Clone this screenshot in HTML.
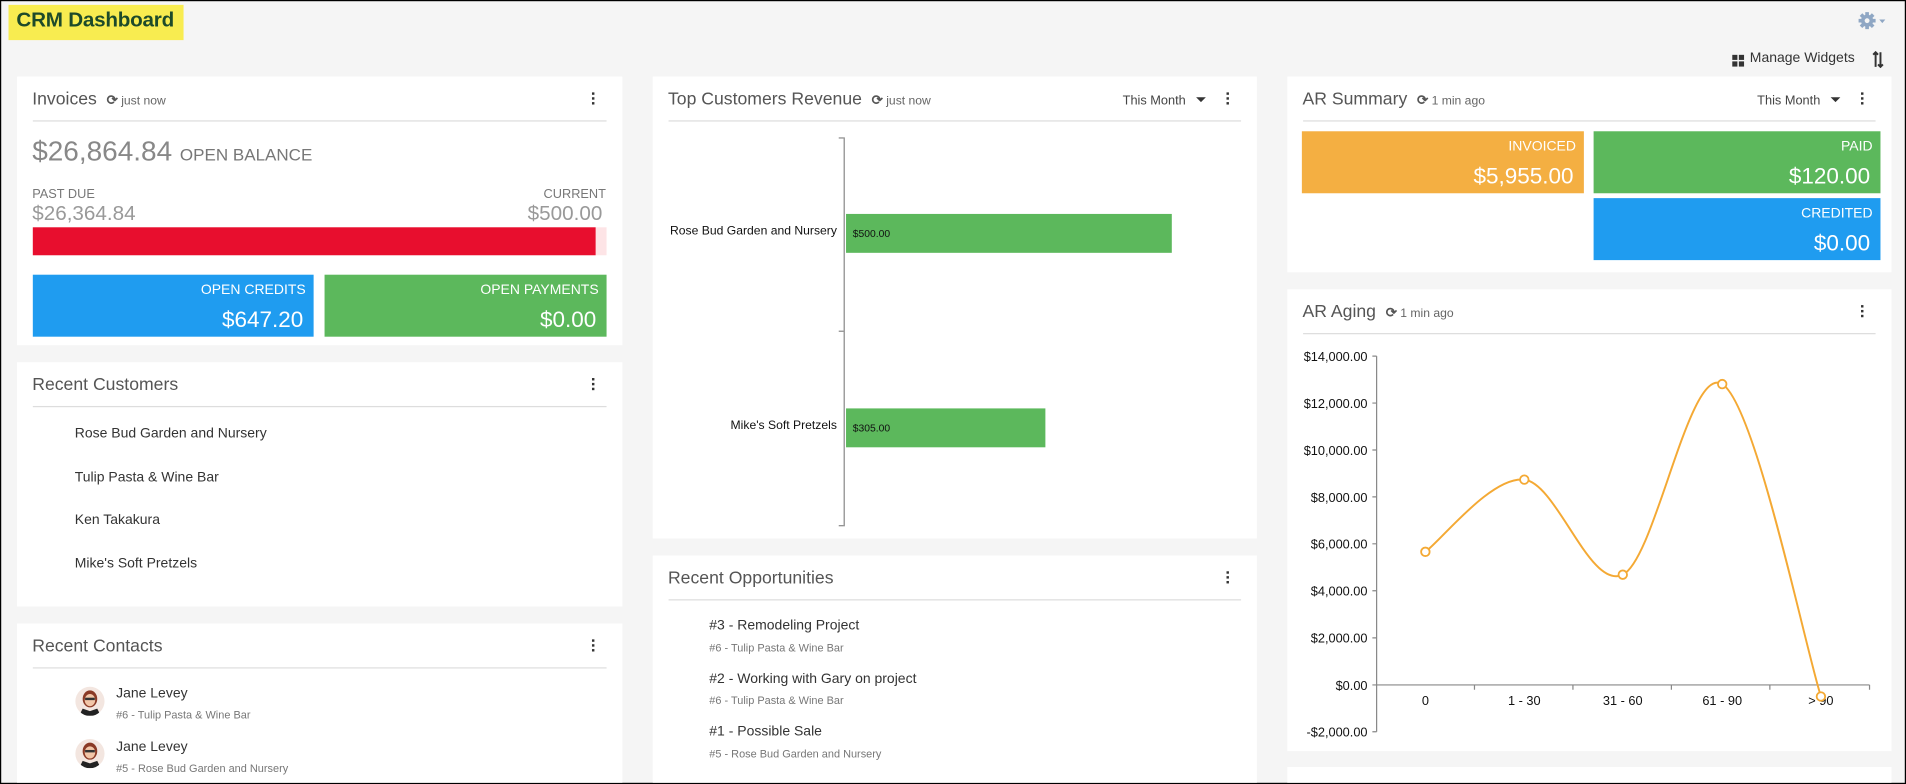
<!DOCTYPE html>
<html><head><meta charset="utf-8"><style>
html,body{margin:0;padding:0;width:1906px;height:784px;overflow:hidden;background:#000}
#w{position:absolute;left:0;top:0;width:1568px;height:645px;transform:scale(1.21556,1.2155);transform-origin:0 0;background:#f5f5f5;font-family:"Liberation Sans",Arial,sans-serif;overflow:hidden;box-sizing:border-box;border:1.5px solid #000;border-right-width:1px}
#in{position:absolute;left:-1.5px;top:-1.5px;width:1568px;height:645px}
.a{position:absolute;white-space:nowrap}
.card{position:absolute;background:#fff}
.t{position:absolute;font-size:14.5px;color:#555;top:11px;left:13px}
.t small{font-size:10px;color:#666;margin-left:8px}
.t small b{font-weight:bold;color:#555;font-size:11px}
.hr{position:absolute;left:13px;right:13px;top:36px;height:1px;background:#ddd}
.k{position:absolute;right:22px;top:13px;width:3px}
.k i{display:block;width:2.5px;height:2.5px;background:#333;margin-bottom:1.5px}
.tm{position:absolute;top:14px;right:42px;font-size:10.5px;color:#444}
.tm:after{content:"";display:inline-block;margin-left:8px;border:4px solid transparent;border-top:4.5px solid #333;border-bottom:0;vertical-align:2px}
.box{position:absolute;color:#fff;text-align:right}
.box .l{position:absolute;right:6px;top:7px;font-size:11.5px}
.box .v{position:absolute;right:8px;top:26px;font-size:18.5px}
.li{position:absolute;font-size:11.5px;color:#333}
.sub{position:absolute;font-size:9px;color:#777}
.av{position:absolute;width:24px;height:24px;border-radius:50%;background:#f3e6e0;overflow:hidden}
</style></head><body><div id="w"><div id="in">
<div class="a" style="left:7px;top:4px;width:144px;height:29px;background:#f8ec50"></div>
<div class="a" style="left:14px;top:7px;font-size:17px;color:#1d4a2a;font-weight:bold;letter-spacing:-0.2px">CRM Dashboard</div>
<svg class="a" style="left:1528px;top:9px" width="24" height="16" viewBox="0 0 24 16"><g fill="#8fa7c4"><circle cx="8" cy="8" r="5"/><g stroke="#8fa7c4" stroke-width="3"><line x1="8" y1="1" x2="8" y2="15"/><line x1="1" y1="8" x2="15" y2="8"/><line x1="3" y1="3" x2="13" y2="13"/><line x1="13" y1="3" x2="3" y2="13"/></g><circle cx="8" cy="8" r="2" fill="#f5f5f5"/><path d="M18 7h5l-2.5 3z" fill="#8fa7c4"/></g></svg>
<svg class="a" style="left:1425px;top:45px" width="10" height="10"><rect x="0" y="0" width="4.3" height="4.3" fill="#333"/><rect x="5.5" y="0" width="4.3" height="4.3" fill="#333"/><rect x="0" y="5.5" width="4.3" height="4.3" fill="#333"/><rect x="5.5" y="5.5" width="4.3" height="4.3" fill="#333"/></svg>
<div class="a" style="left:1440px;top:42px;font-size:11.5px;color:#333">Manage Widgets</div>
<svg class="a" style="left:1540px;top:42px" width="10" height="14" viewBox="0 0 10 14" stroke="#333" stroke-width="1.6" fill="none"><path d="M3 13V1M1 3l2-2 2 2M7 1v12M5 11l2 2 2-2"/></svg>

<div class="card" style="left:14px;top:63px;width:498px;height:221px">
<div class="t">Invoices<small><b>⟳</b> just now</small></div><div class="k"><i></i><i></i><i></i></div><div class="hr"></div>
<div class="a" style="left:13px;top:48px;font-size:23px;color:#888">$26,864.84 <span style="font-size:14px;color:#777">OPEN BALANCE</span></div>
<div class="a" style="left:13px;top:91px;font-size:10.5px;color:#777">PAST DUE</div>
<div class="a" style="right:13px;top:91px;font-size:10.5px;color:#777">CURRENT</div>
<div class="a" style="left:13px;top:103px;font-size:17px;color:#999">$26,364.84</div>
<div class="a" style="right:16px;top:103px;font-size:17px;color:#999">$500.00</div>
<div class="a" style="left:13px;top:124px;width:472px;height:23px;background:#fde4e6"></div>
<div class="a" style="left:13px;top:124px;width:463px;height:23px;background:#e80e2e"></div>
<div class="box" style="left:13px;top:163px;width:231px;height:51px;background:#1f9cf0"><div class="l">OPEN CREDITS</div><div class="v">$647.20</div></div>
<div class="box" style="left:253px;top:163px;width:232px;height:51px;background:#5cb85c"><div class="l">OPEN PAYMENTS</div><div class="v">$0.00</div></div>
</div>

<div class="card" style="left:14px;top:298px;width:498px;height:201px">
<div class="t">Recent Customers</div><div class="k"><i></i><i></i><i></i></div><div class="hr"></div>
<div class="li" style="left:48px;top:53px">Rose Bud Garden and Nursery</div>
<div class="li" style="left:48px;top:89px">Tulip Pasta &amp; Wine Bar</div>
<div class="li" style="left:48px;top:124px">Ken Takakura</div>
<div class="li" style="left:48px;top:160px">Mike's Soft Pretzels</div>
</div>

<div class="card" style="left:14px;top:513px;width:498px;height:140px">
<div class="t">Recent Contacts</div><div class="k"><i></i><i></i><i></i></div><div class="hr"></div>
<div class="av" style="left:48px;top:52px"><svg width="24" height="24"><ellipse cx="12" cy="10" rx="6" ry="7" fill="#8a3a26"/><ellipse cx="12" cy="11" rx="4.3" ry="5" fill="#f2c6a8"/><rect x="8" y="9" width="8" height="2" fill="#333"/><path d="M3 24l3-6 6 2 6-2 3 6z" fill="#222"/></svg></div>
<div class="li" style="left:82px;top:52px">Jane Levey</div><div class="sub" style="left:82px;top:70px">#6 - Tulip Pasta &amp; Wine Bar</div>
<div class="av" style="left:48px;top:95px"><svg width="24" height="24"><ellipse cx="12" cy="10" rx="6" ry="7" fill="#8a3a26"/><ellipse cx="12" cy="11" rx="4.3" ry="5" fill="#f2c6a8"/><rect x="8" y="9" width="8" height="2" fill="#333"/><path d="M3 24l3-6 6 2 6-2 3 6z" fill="#222"/></svg></div>
<div class="li" style="left:82px;top:96px">Jane Levey</div><div class="sub" style="left:82px;top:114px">#5 - Rose Bud Garden and Nursery</div>
</div>

<div class="card" style="left:537px;top:63px;width:497px;height:380px">
<div class="t">Top Customers Revenue<small><b>⟳</b> just now</small></div><div class="tm">This Month</div><div class="k"><i></i><i></i><i></i></div><div class="hr"></div>
<div class="a" style="left:157px;top:50px;width:1px;height:320px;background:#888"></div>
<div class="a" style="left:153px;top:50px;width:4px;height:1px;background:#888"></div>
<div class="a" style="left:153px;top:209px;width:4px;height:1px;background:#888"></div>
<div class="a" style="left:153px;top:369px;width:4px;height:1px;background:#888"></div>
<div class="a" style="left:159px;top:113px;width:268px;height:32px;background:#5cb85c"></div>
<div class="a" style="left:159px;top:273px;width:164px;height:32px;background:#5cb85c"></div>
<div class="a" style="right:345px;top:122px;font-size:10px;color:#111">Rose Bud Garden and Nursery</div>
<div class="a" style="right:345px;top:282px;font-size:10px;color:#111">Mike's Soft Pretzels</div>
<div class="a" style="left:165px;top:124px;font-size:8.5px;color:#111">$500.00</div>
<div class="a" style="left:165px;top:284px;font-size:8.5px;color:#111">$305.00</div>
</div>

<div class="card" style="left:537px;top:457px;width:497px;height:200px">
<div class="t">Recent Opportunities</div><div class="k"><i></i><i></i><i></i></div><div class="hr"></div>
<div class="li" style="left:47px;top:52px">#3 - Remodeling Project</div><div class="sub" style="left:47px;top:71px">#6 - Tulip Pasta &amp; Wine Bar</div>
<div class="li" style="left:47px;top:96px">#2 - Working with Gary on project</div><div class="sub" style="left:47px;top:114px">#6 - Tulip Pasta &amp; Wine Bar</div>
<div class="li" style="left:47px;top:139px">#1 - Possible Sale</div><div class="sub" style="left:47px;top:158px">#5 - Rose Bud Garden and Nursery</div>
</div>

<div class="card" style="left:1059px;top:63px;width:497px;height:161px">
<div class="t">AR Summary<small><b>⟳</b> 1 min ago</small></div><div class="tm">This Month</div><div class="k"><i></i><i></i><i></i></div><div class="hr"></div>
<div class="box" style="left:12px;top:45px;width:232px;height:51px;background:#f4af42"><div class="l">INVOICED</div><div class="v">$5,955.00</div></div>
<div class="box" style="left:252px;top:45px;width:236px;height:51px;background:#5cb85c"><div class="l">PAID</div><div class="v">$120.00</div></div>
<div class="box" style="left:252px;top:100px;width:236px;height:51px;background:#1f9cf0"><div class="l">CREDITED</div><div class="v">$0.00</div></div>
</div>

<div class="card" style="left:1059px;top:238px;width:497px;height:380px">
<div class="t">AR Aging<small><b>⟳</b> 1 min ago</small></div><div class="k"><i></i><i></i><i></i></div><div class="hr"></div>
</div>
<div class="card" style="left:1059px;top:631px;width:497px;height:30px"></div>
<svg class="a" style="left:0;top:0" width="1568" height="645" font-family="Liberation Sans,Arial,sans-serif" font-size="10.5" fill="#111">
<g stroke="#888" stroke-width="1" fill="none">
<path d="M1132.5 293V602M1129 293h3.5M1129 331.6h3.5M1129 370.2h3.5M1129 408.8h3.5M1129 447.4h3.5M1129 486h3.5M1129 524.8h3.5M1129 602h3.5"/>
<path d="M1129 563.5H1538M1213 563.5v4M1294 563.5v4M1375 563.5v4M1456 563.5v4M1538 563.5v4"/>
</g>
<g text-anchor="end"><text x="1125" y="297">$14,000.00</text><text x="1125" y="335.6">$12,000.00</text><text x="1125" y="374.2">$10,000.00</text><text x="1125" y="412.8">$8,000.00</text><text x="1125" y="451.4">$6,000.00</text><text x="1125" y="490">$4,000.00</text><text x="1125" y="528.8">$2,000.00</text><text x="1125" y="567.5">$0.00</text><text x="1125" y="606">-$2,000.00</text></g>
<g text-anchor="middle"><text x="1172.6" y="580">0</text><text x="1254" y="580">1 - 30</text><text x="1335" y="580">31 - 60</text><text x="1416.8" y="580">61 - 90</text><text x="1498" y="580">&gt; 90</text></g>
<path d="M1172.6 454C1186.2 444.1 1226.9 391.5 1254 394.6C1281.1 397.7 1307.9 485.9 1335 472.8C1362.1 459.7 1389.6 299.3 1416.8 316C1443.97 332.7 1484.5 530.2 1498 573" stroke="#f4a934" stroke-width="1.6" fill="none"/>
<g fill="#fff" stroke="#f4a934" stroke-width="1.5"><circle cx="1172.6" cy="454" r="3.5"/><circle cx="1254" cy="394.6" r="3.5"/><circle cx="1335" cy="472.8" r="3.5"/><circle cx="1416.8" cy="316" r="3.5"/><circle cx="1498" cy="573" r="3.5"/></g>
</svg>
</div></div></body></html>
